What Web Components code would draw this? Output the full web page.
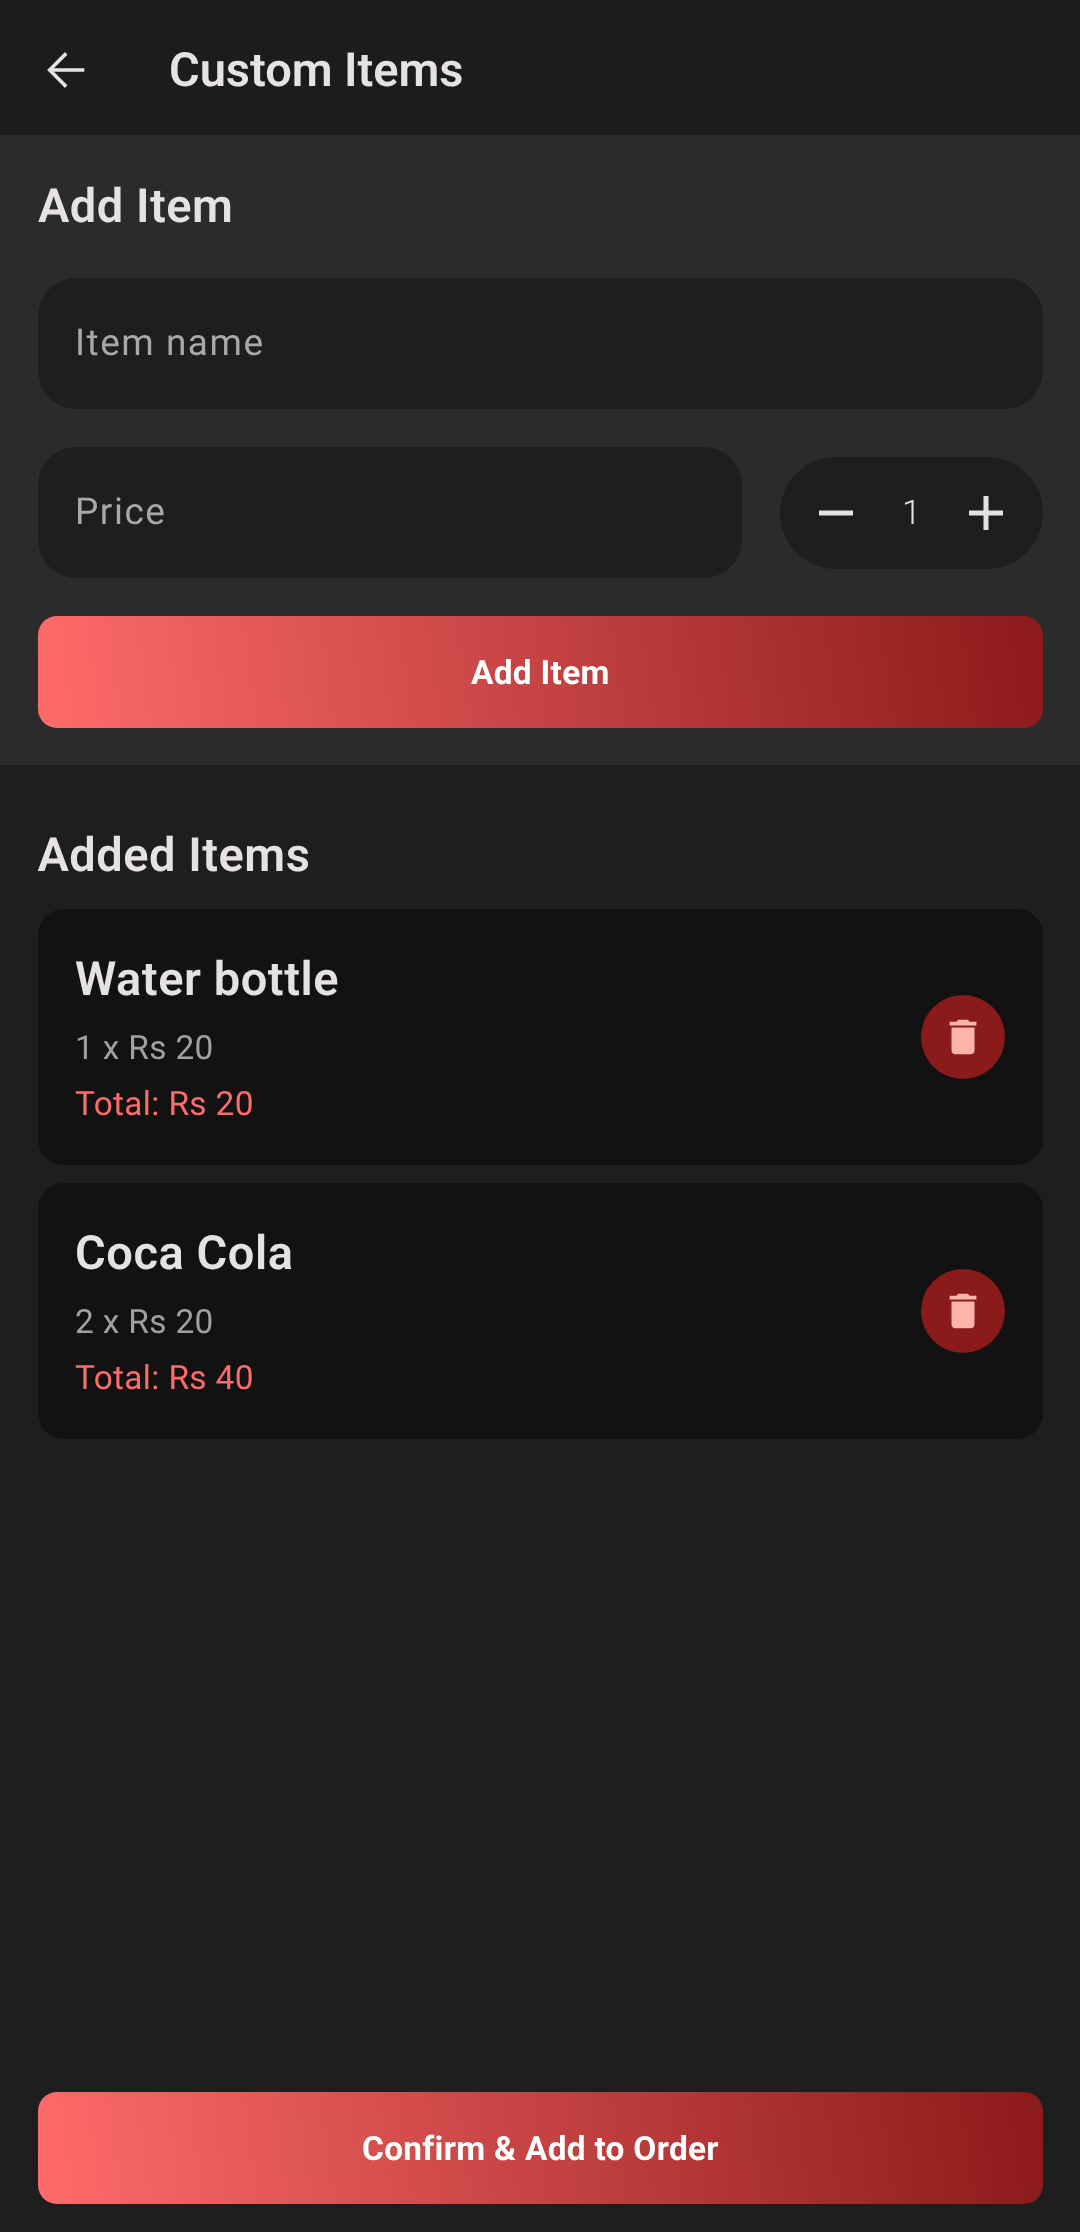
<!DOCTYPE html>
<html><head><meta charset="utf-8">
<style>
html,body{margin:0;padding:0;background:#1e1e1e;}
body{width:1080px;height:2232px;font-family:Roboto,sans-serif;color:#e6e1e5;overflow:hidden;text-rendering:geometricPrecision;}
app-screen{height:2232px;}
</style></head><body>
<template id="t-screen"><style>
:host{display:flex;flex-direction:column;background:#1e1e1e;}
</style><slot></slot></template>

<template id="t-bar"><style>
:host{display:flex;align-items:center;height:135px;background:#1c1c1c;flex:none;}
svg{width:58px;height:58px;margin-left:36px;flex:none;margin-top:4px;}
span{margin-left:75px;font:600 47px/56px Roboto,sans-serif;color:#e6e1e5;margin-top:6px;letter-spacing:-.05px;will-change:transform;}
</style><svg viewBox="0 0 24 24"><path fill="#e6e1e5" d="M20 11.25H7.4l5.6-5.6L12 4.6 4.6 12l7.4 7.4 1-1.05-5.600-5.600H20z"/></svg><span><slot></slot></span></template>

<template id="t-form"><style>
:host{display:flex;flex-direction:column;background:#2b2b2b;padding:44px 37.500px 37px;flex:none;}
</style><slot></slot></template>

<template id="t-heading"><style>
:host{display:block;font:600 47px/56px Roboto,sans-serif;color:#e6e1e5;letter-spacing:.5px;will-change:transform;}
</style><slot></slot></template>

<template id="t-field"><style>
:host{display:flex;align-items:center;height:131px;box-sizing:border-box;padding:0 37.500px;background:#1e1e1e;border-radius:38px;color:#a8a8a8;font:400 37px/48px Roboto,sans-serif;letter-spacing:1.5px;}
span{will-change:transform;margin-top:1px;}
</style><span><slot></slot></span></template>

<template id="t-stepper"><style>
:host{display:flex;align-items:center;justify-content:space-between;width:263px;height:112px;box-sizing:border-box;padding:0 27px;background:#1e1e1e;border-radius:56px;flex:none;}
svg{width:58px;height:58px;display:block;}
span{font:300 34px/40px Roboto,sans-serif;color:#e6e1e5;will-change:transform;}
</style>
<svg viewBox="0 0 58 58"><path fill="#e6e1e5" d="M12 26.500h34v5H12z"/></svg><span><slot></slot></span>
<svg viewBox="0 0 58 58"><path fill="#e6e1e5" d="M12 26.500h14.500V12h5v14.500H46v5H31.500V46h-5V31.500H12z"/></svg></template>

<template id="t-button"><style>
:host{display:flex;align-items:center;justify-content:center;height:112px;border-radius:19px;background:linear-gradient(82deg,#ff6b6b,#8b1a1a);color:#fff;font:700 33.400px/40px Roboto,sans-serif;letter-spacing:.3px;flex:none;}
span{will-change:transform;margin-top:3px;}
</style><span><slot></slot></span></template>

<template id="t-card"><style>
:host{display:flex;align-items:center;justify-content:space-between;height:256px;box-sizing:border-box;padding:0 37.500px;background:#121212;border-radius:26px;flex:none;}
.x{align-self:flex-start;padding-top:43px;will-change:transform;}
.n{font:600 47px/56px Roboto,sans-serif;color:#e6e1e5;letter-spacing:.55px;}
.q{font:400 33.400px/40px Roboto,sans-serif;color:#a0a0a0;margin-top:20.500px;letter-spacing:.35px;}
.t{font:400 33.400px/40px Roboto,sans-serif;color:#ff6b6b;margin-top:16.500px;letter-spacing:.35px;}
.d{width:84px;height:84px;border-radius:50%;background:#8b1a1a;display:flex;align-items:center;justify-content:center;}
svg{width:46px;height:46px;}
</style><div class="x"><div class="n"></div><div class="q"></div><div class="t"></div></div>
<div class="d"><svg viewBox="0 0 24 24"><path fill="#ffb4ab" d="M6 19c0 1.100.9 2 2 2h8c1.100 0 2-.9 2-2V7H6v12zM19 4h-3.500l-1-1h-5l-1 1H5v2h14V4z"/></svg></div></template>

<app-screen>
<app-bar>Custom Items</app-bar>
<form-panel>
  <sec-heading>Add Item</sec-heading>
  <form-row style="display:block;height:43px"></form-row>
  <text-field>Item name</text-field>
  <form-row style="display:flex;align-items:center;gap:38px;margin-top:38px"><text-field style="flex:1">Price</text-field><qty-stepper>1</qty-stepper></form-row>
  <form-row style="display:block;height:38px"></form-row>
  <grad-button>Add Item</grad-button>
</form-panel>
<sec-heading style="padding:63px 37.500px 25px">Added Items</sec-heading>
<form-row style="display:flex;flex-direction:column;gap:18px;padding:0 37.500px">
  <item-card name="Water bottle" qty="1 x Rs 20" total="Total: Rs 20"></item-card>
  <item-card name="Coca Cola" qty="2 x Rs 20" total="Total: Rs 40"></item-card>
</form-row>
<form-row style="display:block;flex:1"></form-row>
<form-row style="display:flex;flex-direction:column;padding:0 37.500px 28px"><grad-button>Confirm &amp; Add to Order</grad-button></form-row>
</app-screen>
<script>
function def(tag,tpl,init){customElements.define(tag,class extends HTMLElement{constructor(){super();this.attachShadow({mode:'open'}).appendChild(document.getElementById(tpl).content.cloneNode(true));}connectedCallback(){if(init)init(this);}});}
def('app-screen','t-screen');def('app-bar','t-bar');def('form-panel','t-form');def('sec-heading','t-heading');def('text-field','t-field');def('qty-stepper','t-stepper');def('grad-button','t-button');
def('item-card','t-card',el=>{const s=el.shadowRoot;s.querySelector('.n').textContent=el.getAttribute('name');s.querySelector('.q').textContent=el.getAttribute('qty');s.querySelector('.t').textContent=el.getAttribute('total');});
customElements.define('form-row',class extends HTMLElement{constructor(){super();this.attachShadow({mode:'open'}).innerHTML='<slot></slot>';}});
</script>
</body></html>
